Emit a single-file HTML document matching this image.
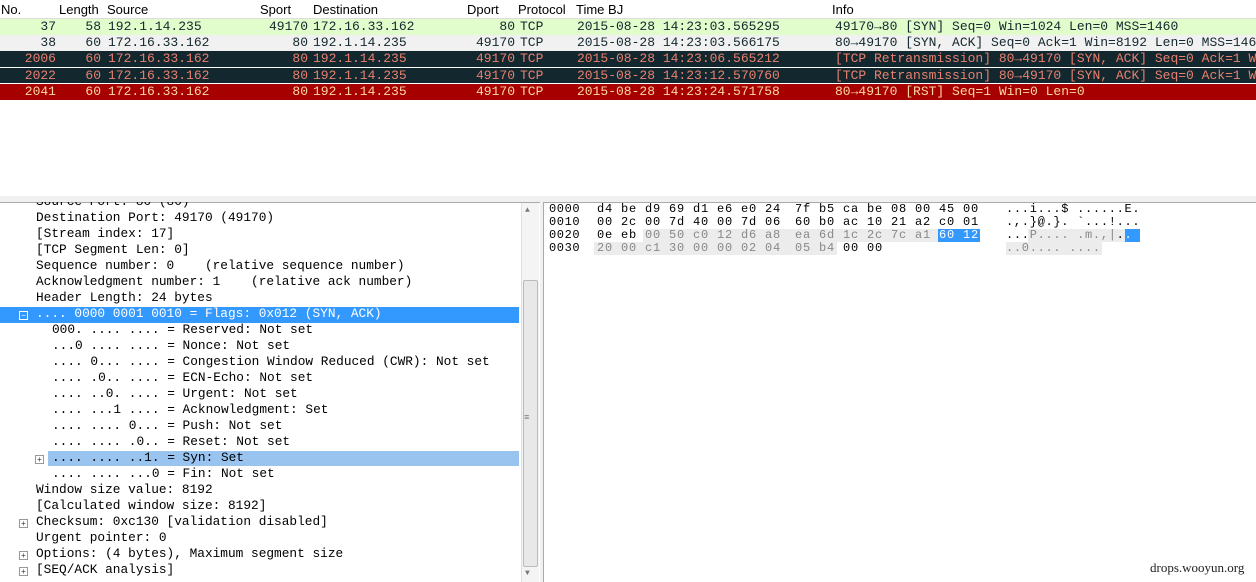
<!DOCTYPE html>
<html><head><meta charset="utf-8"><style>
body{margin:0;width:1256px;height:582px;background:#fff;position:relative;overflow:hidden;font-family:"Liberation Mono",monospace;}
.a{position:absolute;white-space:pre;}
.hdr{font-family:"Liberation Sans",sans-serif;font-size:13px;top:2px;color:#000}
.row{position:absolute;left:0;width:1256px;height:16px;font-size:13px;line-height:16px}
.row span{position:absolute;white-space:pre;top:0}
.r{text-align:right}
.t{position:absolute;font-size:12.8px;line-height:16px;white-space:pre;color:#000}
.h{position:absolute;font-size:12px;line-height:13px;white-space:pre;color:#000;letter-spacing:0.8px}
.s{position:absolute;font-size:12px;line-height:13px;white-space:pre;color:#000;letter-spacing:0.7px}
.g{color:#888}
.pm{position:absolute;width:7px;height:7px;border:1px solid #999;font-size:8px;line-height:7px;text-align:center;color:#333;font-family:"Liberation Sans",sans-serif;background:#fff}
</style></head><body>
<div class="a hdr" style="left:1px">No.</div>
<div class="a hdr" style="left:59px">Length</div>
<div class="a hdr" style="left:107px">Source</div>
<div class="a hdr" style="left:260px">Sport</div>
<div class="a hdr" style="left:313px">Destination</div>
<div class="a hdr" style="left:467px">Dport</div>
<div class="a hdr" style="left:518px">Protocol</div>
<div class="a hdr" style="left:576px">Time BJ</div>
<div class="a hdr" style="left:832px">Info</div>
<div style="position:absolute;left:0;top:18px;width:1256px;height:1px;background:#ddd"></div>

<div class="row" style="top:19px;background:#e2fdcc;color:#12272e">
<span class="r" style="right:1200px">37</span><span class="r" style="right:1155px">58</span><span style="left:108px">192.1.14.235</span><span class="r" style="right:948px">49170</span><span style="left:313px">172.16.33.162</span><span class="r" style="right:741px">80</span><span style="left:520px">TCP</span><span style="left:577px">2015-08-28 14:23:03.565295</span><span style="left:835px">49170→80 [SYN] Seq=0 Win=1024 Len=0 MSS=1460</span></div>
<div class="row" style="top:35px;background:#f1f1f1;color:#12272e">
<span class="r" style="right:1200px">38</span><span class="r" style="right:1155px">60</span><span style="left:108px">172.16.33.162</span><span class="r" style="right:948px">80</span><span style="left:313px">192.1.14.235</span><span class="r" style="right:741px">49170</span><span style="left:520px">TCP</span><span style="left:577px">2015-08-28 14:23:03.566175</span><span style="left:835px">80→49170 [SYN, ACK] Seq=0 Ack=1 Win=8192 Len=0 MSS=1460</span></div>
<div class="row" style="top:51px;background:#12272e;color:#e9806f">
<span class="r" style="right:1200px">2006</span><span class="r" style="right:1155px">60</span><span style="left:108px">172.16.33.162</span><span class="r" style="right:948px">80</span><span style="left:313px">192.1.14.235</span><span class="r" style="right:741px">49170</span><span style="left:520px">TCP</span><span style="left:577px">2015-08-28 14:23:06.565212</span><span style="left:835px">[TCP Retransmission] 80→49170 [SYN, ACK] Seq=0 Ack=1 Win</span></div>
<div class="row" style="top:67px;background:#12272e;color:#e9806f;border-top:1px solid #fff">
<span class="r" style="right:1200px">2022</span><span class="r" style="right:1155px">60</span><span style="left:108px">172.16.33.162</span><span class="r" style="right:948px">80</span><span style="left:313px">192.1.14.235</span><span class="r" style="right:741px">49170</span><span style="left:520px">TCP</span><span style="left:577px">2015-08-28 14:23:12.570760</span><span style="left:835px">[TCP Retransmission] 80→49170 [SYN, ACK] Seq=0 Ack=1 Win</span></div>
<div class="row" style="top:83px;background:#a60000;color:#fcd8a0;border-top:1px solid #fff">
<span class="r" style="right:1200px">2041</span><span class="r" style="right:1155px">60</span><span style="left:108px">172.16.33.162</span><span class="r" style="right:948px">80</span><span style="left:313px">192.1.14.235</span><span class="r" style="right:741px">49170</span><span style="left:520px">TCP</span><span style="left:577px">2015-08-28 14:23:24.571758</span><span style="left:835px">80→49170 [RST] Seq=1 Win=0 Len=0</span></div>

<div style="position:absolute;left:0;top:196px;width:1256px;height:6px;background:#f0f0f0;border-bottom:1px solid #aaa"></div>
<div style="position:absolute;left:540px;top:196px;width:3px;height:386px;background:#f0f0f0"></div>
<div style="position:absolute;left:543px;top:202px;width:1px;height:380px;background:#aaa"></div>
<div style="position:absolute;left:521px;top:203px;width:17px;height:379px;background:#f4f4f4;border-left:1px solid #e0e0e0"></div>
<div style="position:absolute;left:523px;top:280px;width:13px;height:285px;background:#e8e8e8;border:1px solid #bbb;border-radius:2px"></div>
<div class="a" style="left:524px;top:413px;font-size:9px;color:#777">≡</div>
<div class="a" style="left:525px;top:206px;font-size:8px;color:#777">▲</div>
<div class="a" style="left:525px;top:569px;font-size:8px;color:#777">▼</div>

<div class="t" style="left:36px;top:194px;clip-path:inset(8px 0 0 0)">Source Port: 80 (80)</div>
<div class="t" style="left:36px;top:210px">Destination Port: 49170 (49170)</div>
<div class="t" style="left:36px;top:226px">[Stream index: 17]</div>
<div class="t" style="left:36px;top:242px">[TCP Segment Len: 0]</div>
<div class="t" style="left:36px;top:258px">Sequence number: 0    (relative sequence number)</div>
<div class="t" style="left:36px;top:274px">Acknowledgment number: 1    (relative ack number)</div>
<div class="t" style="left:36px;top:290px">Header Length: 24 bytes</div>
<div style="position:absolute;left:0;top:307px;width:519px;height:16px;background:#3399ff"></div>
<div class="pm" style="left:19px;top:311px;background:#3399ff;border-color:#fff;color:#fff">−</div>
<div class="t" style="left:36px;top:306px;color:#fff">.... 0000 0001 0010 = Flags: 0x012 (SYN, ACK)</div>
<div class="t" style="left:52px;top:322px">000. .... .... = Reserved: Not set</div>
<div class="t" style="left:52px;top:338px">...0 .... .... = Nonce: Not set</div>
<div class="t" style="left:52px;top:354px">.... 0... .... = Congestion Window Reduced (CWR): Not set</div>
<div class="t" style="left:52px;top:370px">.... .0.. .... = ECN-Echo: Not set</div>
<div class="t" style="left:52px;top:386px">.... ..0. .... = Urgent: Not set</div>
<div class="t" style="left:52px;top:402px">.... ...1 .... = Acknowledgment: Set</div>
<div class="t" style="left:52px;top:418px">.... .... 0... = Push: Not set</div>
<div class="t" style="left:52px;top:434px">.... .... .0.. = Reset: Not set</div>
<div style="position:absolute;left:48px;top:451px;width:471px;height:15px;background:#99c4f0"></div>
<div class="pm" style="left:35px;top:455px">+</div>
<div class="t" style="left:52px;top:450px">.... .... ..1. = Syn: Set</div>
<div class="t" style="left:52px;top:466px">.... .... ...0 = Fin: Not set</div>
<div class="t" style="left:36px;top:482px">Window size value: 8192</div>
<div class="t" style="left:36px;top:498px">[Calculated window size: 8192]</div>
<div class="pm" style="left:19px;top:519px">+</div>
<div class="t" style="left:36px;top:514px">Checksum: 0xc130 [validation disabled]</div>
<div class="t" style="left:36px;top:530px">Urgent pointer: 0</div>
<div class="pm" style="left:19px;top:551px">+</div>
<div class="t" style="left:36px;top:546px">Options: (4 bytes), Maximum segment size</div>
<div class="pm" style="left:19px;top:567px">+</div>
<div class="t" style="left:36px;top:562px">[SEQ/ACK analysis]</div>

<!-- hex -->
<div style="position:absolute;left:643px;top:229px;width:337px;height:13px;background:#ececec"></div>
<div style="position:absolute;left:594px;top:242px;width:243px;height:13px;background:#ececec"></div>
<div style="position:absolute;left:1028px;top:229px;width:112px;height:13px;background:#ececec"></div>
<div style="position:absolute;left:1006px;top:242px;width:96px;height:13px;background:#ececec"></div>
<div style="position:absolute;left:938px;top:229px;width:42px;height:13px;background:#3399ff"></div>
<div style="position:absolute;left:1125px;top:229px;width:15px;height:13px;background:#3399ff"></div>
<div class="h" style="left:549px;top:203px;letter-spacing:0.6px">0000</div>
<div class="h" style="left:549px;top:216px;letter-spacing:0.6px">0010</div>
<div class="h" style="left:549px;top:229px;letter-spacing:0.6px">0020</div>
<div class="h" style="left:549px;top:242px;letter-spacing:0.6px">0030</div>
<div class="h" style="left:597px;top:203px">d4 be d9 69 d1 e6 e0 24</div>
<div class="h" style="left:795px;top:203px">7f b5 ca be 08 00 45 00</div>
<div class="h" style="left:597px;top:216px">00 2c 00 7d 40 00 7d 06</div>
<div class="h" style="left:795px;top:216px">60 b0 ac 10 21 a2 c0 01</div>
<div class="h" style="left:597px;top:229px">0e eb <span class="g">00 50 c0 12 d6 a8</span></div>
<div class="h" style="left:795px;top:229px"><span class="g">ea 6d 1c 2c 7c a1 </span><span style="color:#fff">60 12</span></div>
<div class="h g" style="left:597px;top:242px">20 00 c1 30 00 00 02 04</div>
<div class="h" style="left:795px;top:242px"><span class="g">05 b4</span> 00 00</div>
<div class="s" style="left:1006px;top:203px">...i...$ ......E.</div>
<div class="s" style="left:1006px;top:216px">.,.}@.}. `...!...</div>
<div class="s" style="left:1006px;top:229px">...<span class="g">P.... .m.,|</span>.<span style="color:#fff">.</span></div>
<div class="s g" style="left:1006px;top:242px">..0.... ....</div>

<div class="a" style="left:1150px;top:560px;font-family:'Liberation Serif',serif;font-size:13px;color:#222">drops.wooyun.org</div>
</body></html>
